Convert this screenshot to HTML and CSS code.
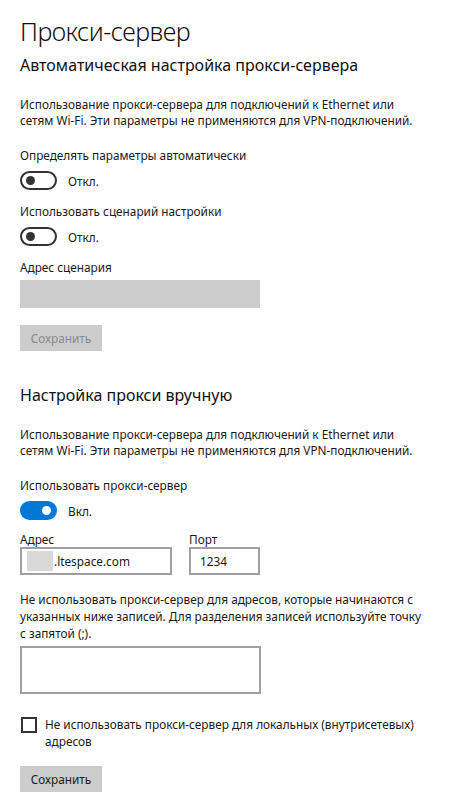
FILE: index.html
```html
<!DOCTYPE html>
<html lang="ru">
<head>
  <meta charset="UTF-8">
  <title>Прокси-сервер</title>
  <link rel="stylesheet" href="styles.css">
</head>
<body>
  <h1 class="title">Прокси-сервер</h1>

  <section class="group">
    <h2 class="heading">Автоматическая настройка прокси-сервера</h2>
    <p class="note">Использование прокси-сервера для подключений к Ethernet или сетям Wi-Fi. Эти параметры не применяются для VPN-подключений.</p>

    <div class="field">
      <div class="label">Определять параметры автоматически</div>
      <div class="switch-row">
        <span class="switch"><span class="knob"></span></span>
        <span class="state">Откл.</span>
      </div>
    </div>

    <div class="field">
      <div class="label">Использовать сценарий настройки</div>
      <div class="switch-row">
        <span class="switch"><span class="knob"></span></span>
        <span class="state">Откл.</span>
      </div>
    </div>

    <div class="field">
      <div class="label">Адрес сценария</div>
      <div class="input input-disabled"></div>
    </div>

    <button class="btn" disabled>Сохранить</button>
  </section>

  <section class="group group-manual">
    <h2 class="heading">Настройка прокси вручную</h2>
    <p class="note">Использование прокси-сервера для подключений к Ethernet или сетям Wi-Fi. Эти параметры не применяются для VPN-подключений.</p>

    <div class="field">
      <div class="label">Использовать прокси-сервер</div>
      <div class="switch-row">
        <span class="switch switch-on"><span class="knob"></span></span>
        <span class="state">Вкл.</span>
      </div>
    </div>

    <div class="addr-row">
      <div class="addr">
        <div class="label">Адрес</div>
        <div class="input input-addr"><span class="blur"></span>.ltespace.com</div>
      </div>
      <div class="port">
        <div class="label">Порт</div>
        <div class="input input-port">1234</div>
      </div>
    </div>

    <p class="note note-excl">Не использовать прокси-сервер для адресов, которые начинаются с указанных ниже записей. Для разделения записей используйте точку с запятой (;).</p>
    <div class="input input-area"></div>

    <label class="check">
      <span class="box"></span>
      <span class="check-text">Не использовать прокси-сервер для локальных (внутрисетевых) адресов</span>
    </label>

    <button class="btn">Сохранить</button>
  </section>
</body>
</html>
```

FILE: styles.css
```css
* {
  box-sizing: border-box;
}
body {
  margin: 0;
  padding: 14px 20px 0;
  font-family: "Noto Sans", "Open Sans", sans-serif;
  font-size: 11.8px;
  line-height: 16px;
  color: #1a1a1a;
  background: #fff;
  width: 474px;
}
.title {
  margin: 0;
  font-size: 25px;
  line-height: 34px;
  font-weight: 300;
  letter-spacing: -0.5px;
  color: #111;
}
.heading {
  margin: 0;
  font-size: 16px;
  line-height: 24px;
  font-weight: 400;
  color: #111;
}
.group {
  display: flex;
  flex-direction: column;
  align-items: flex-start;
}
.group > .heading {
  margin-top: 5px;
}
.group-manual > .heading {
  margin-top: 32px;
}
.note {
  margin: 19px 0 0;
  width: 405px;
}
.field {
  margin-top: 13px;
}
.note + .field {
  margin-top: 19px;
}
.switch-row {
  display: flex;
  align-items: center;
  gap: 11px;
  margin-top: 8px;
  height: 19px;
}
.switch {
  width: 37px;
  height: 19px;
  border: 2px solid #333;
  border-radius: 10px;
  display: flex;
  align-items: center;
  padding: 0 4px;
}
.knob {
  width: 9px;
  height: 9px;
  border-radius: 50%;
  background: #333;
}
.switch-on {
  background: #0078d7;
  border-color: #0078d7;
  justify-content: flex-end;
}
.switch-on .knob {
  background: #fff;
}
.input {
  border: 2px solid #a0a0a0;
  background: #fff;
  height: 28px;
  display: flex;
  align-items: center;
  padding: 0 8px;
}
.input-disabled {
  width: 240px;
  background: #ccc;
  border-color: #ccc;
  margin-top: 5px;
}
.btn {
  margin-top: 17px;
  width: 82px;
  height: 26px;
  border: none;
  background: #ccc;
  font: inherit;
  color: #1a1a1a;
  padding: 0;
}
.btn:disabled {
  color: #8a8a8a;
}
.addr-row {
  display: flex;
  gap: 17px;
  margin-top: 11px;
}
.input-addr {
  width: 152px;
  padding-left: 5px;
}
.blur {
  width: 26px;
  height: 20px;
  background: #d9d9d9;
  margin-right: 1px;
}
.input-port {
  width: 71px;
  padding-left: 9px;
}
.note-excl {
  margin-top: 16px;
  width: 402px;
  line-height: 17px;
}
.input-area {
  width: 241px;
  height: 48px;
  margin-top: 4px;
}
.check {
  display: flex;
  align-items: flex-start;
  gap: 8px;
  margin-top: 23px;
  padding-left: 1px;
}
.box {
  flex: none;
  width: 16px;
  height: 16px;
  border: 2px solid #333;
}
.check-text {
  width: 370px;
  line-height: 17px;
  margin-top: -1px;
}
.group-manual .btn {
  margin-top: 16px;
}
```
